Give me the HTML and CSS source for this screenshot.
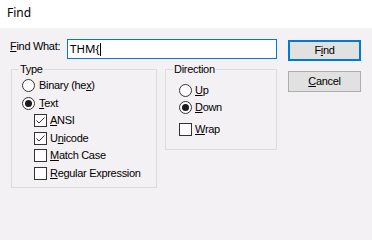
FILE: index.html
```html
<!DOCTYPE html>
<html>
<head>
<meta charset="utf-8">
<link rel="stylesheet" href="styles.css">
</head>
<body>
<div class="window">
  <div class="titlebar">Find</div>
  <div class="client">
    <div class="main">
      <div class="findrow">
        <div class="findlabel"><u>F</u>ind What:</div>
        <div class="input"><span class="value">THM{</span><span class="caret"></span></div>
      </div>
      <div class="groups">
        <div class="group type">
          <span class="legend">Type</span>
          <div class="opt"><span class="radio"></span><span><span>Binary (he</span><u>x</u><span>)</span></span></div>
          <div class="opt"><span class="radio on"></span><span><u>T</u>ext</span></div>
          <div class="opt sub"><span class="check"><svg width="11" height="11" viewBox="0 0 11 11"><polyline points="1.5,5.5 4,8 9.5,2.5" fill="none" stroke="#333" stroke-width="1"/></svg></span><span><u>A</u>NSI</span></div>
          <div class="opt sub"><span class="check"><svg width="11" height="11" viewBox="0 0 11 11"><polyline points="1.5,5.5 4,8 9.5,2.5" fill="none" stroke="#333" stroke-width="1"/></svg></span><span>U<u>n</u>icode</span></div>
          <div class="opt sub"><span class="check"></span><span><u>M</u>atch Case</span></div>
          <div class="opt sub"><span class="check"></span><span><u>R</u>egular Expression</span></div>
        </div>
        <div class="group dir">
          <span class="legend">Direction</span>
          <div class="opt"><span class="radio"></span><span><u>U</u>p</span></div>
          <div class="opt"><span class="radio on"></span><span><u>D</u>own</span></div>
          <div class="opt wrap"><span class="check"></span><span><u>W</u>rap</span></div>
        </div>
      </div>
    </div>
    <div class="buttons">
      <div class="btn default">F<u>i</u>nd</div>
      <div class="btn"><u>C</u>ancel</div>
    </div>
  </div>
</div>
</body>
</html>
```

FILE: styles.css
```css
html, body {
  margin: 0;
  padding: 0;
}
body {
  width: 372px;
  height: 200px;
  overflow: hidden;
  background: #f4f1f4;
}
.window {
  width: 372px;
  height: 200px;
  display: flex;
  flex-direction: column;
}
.titlebar {
  height: 28px;
  background: #ffffff;
  padding-left: 7px;
  box-sizing: border-box;
  font-family: "Noto Sans", sans-serif;
  font-size: 12px;
  line-height: 25px;
  color: #000;
}
.client {
  flex: 1;
  background: #f4f1f4;
  display: flex;
  padding: 11px 0 0 10px;
  font-family: "Liberation Sans", Arial, sans-serif;
  font-size: 11px;
  letter-spacing: -0.3px;
  line-height: 13px;
  color: #000;
}
u {
  text-decoration: underline;
  text-underline-offset: 1px;
}
.main {
  width: 267px;
  display: flex;
  flex-direction: column;
}
.findrow {
  display: flex;
  align-items: flex-start;
}
.findlabel {
  width: 57px;
  padding-top: 1px;
  white-space: nowrap;
}
.input {
  width: 210px;
  height: 20px;
  box-sizing: border-box;
  border: 1px solid #0078d7;
  background: #fff;
  padding-left: 2px;
  display: flex;
  align-items: center;
  font-family: "Noto Sans", sans-serif;
  font-size: 11.5px;
  letter-spacing: 0;
  line-height: 18px;
}
.caret {
  width: 1px;
  height: 13px;
  background: #000;
}
.groups {
  display: flex;
  align-items: flex-start;
  margin-top: 10px;
  gap: 8px;
}
.group {
  position: relative;
  border: 1px solid #dcdcdc;
  box-sizing: border-box;
  display: flex;
  flex-direction: column;
}
.legend {
  position: absolute;
  top: -7px;
  left: 7px;
  padding: 0 1px;
  background: #f4f1f4;
  line-height: 13px;
}
.type {
  margin-left: 1px;
  width: 146px;
  height: 119px;
  padding: 6px 0 0 10px;
}
.dir {
  width: 112px;
  height: 81px;
  padding: 12px 0 0 13px;
}
.opt {
  display: flex;
  align-items: center;
  height: 18px;
  white-space: nowrap;
}
.opt.sub {
  height: 17.5px;
  padding-left: 12px;
}
.dir .opt {
  height: 17px;
}
.dir .opt.wrap {
  margin-top: 5px;
}
.radio {
  width: 13px;
  height: 13px;
  box-sizing: border-box;
  border: 1px solid #333;
  border-radius: 50%;
  background: #fff;
  margin-right: 4px;
  display: flex;
  align-items: center;
  justify-content: center;
  flex-shrink: 0;
}
.dir .radio {
  margin-right: 3px;
}
.radio.on::after {
  content: "";
  width: 7px;
  height: 7px;
  border-radius: 50%;
  background: #1a1a1a;
}
.check {
  width: 13px;
  height: 13px;
  box-sizing: border-box;
  border: 1px solid #333;
  background: #fff;
  margin-right: 3px;
  flex-shrink: 0;
  display: block;
}
.check svg {
  display: block;
}
.buttons {
  margin-left: 11px;
  padding-top: 1px;
  display: flex;
  flex-direction: column;
  gap: 10px;
}
.btn {
  width: 73px;
  height: 21px;
  box-sizing: border-box;
  border: 1px solid #adadad;
  background: #e1e1e1;
  display: flex;
  align-items: center;
  justify-content: center;
  line-height: 13px;
}
.btn.default {
  border: 2px solid #0078d7;
}
```
